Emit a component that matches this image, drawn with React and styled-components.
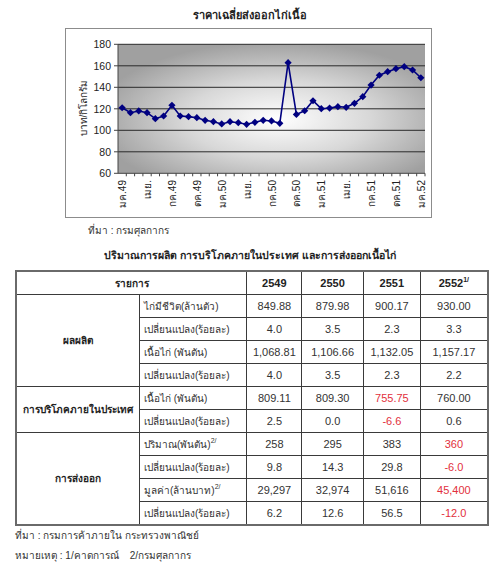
import React from "react";
import styled, { createGlobalStyle } from "styled-components";

const GlobalStyle = createGlobalStyle`
  html, body {
    margin: 0;
    padding: 0;
    background: #fff;
  }
  body {
    font-family: Tahoma, "Liberation Sans", "DejaVu Sans", sans-serif;
    color: #222;
  }
`;

const Page = styled.div`
  width: 500px;
  height: 578px;
  padding-top: 8px;
  box-sizing: border-box;
`;

const Title = styled.div`
  text-align: center;
  font-weight: bold;
  font-size: ${(p) => p.$size || 11}px;
  line-height: 14px;
  margin-top: ${(p) => p.$gap || 0}px;
`;

const ChartFrame = styled.div`
  margin: 6px 0 0 65px;
  width: 367px;
  height: 190px;
  border: 1px solid #8c8c8c;
  box-sizing: border-box;

  svg {
    display: block;
  }
`;

const Note = styled.div`
  font-size: 10px;
  line-height: 14px;
  color: #333;
  margin-top: ${(p) => p.$gap}px;
  padding-left: ${(p) => p.$indent}px;
  white-space: pre;
`;

const TableWrap = styled.div`
  margin: 8px 0 0 15px;
  width: 474px;
`;

const Table = styled.table`
  width: 100%;
  table-layout: fixed;
  border-collapse: collapse;
  border: 2px solid #6a6a6a;
  font-size: 11px;
  font-family: "Liberation Sans", Arial, sans-serif;
`;

const Col = styled.col`
  width: ${(p) => p.$pct}%;
`;

const Head = styled.th`
  border: 1px solid #3a3a3a;
  height: 22px;
  padding: 0;
  font-weight: bold;
  font-size: ${(p) => (p.$thai ? 10 : 11)}px;
  font-family: ${(p) => (p.$thai ? "Tahoma, sans-serif" : "inherit")};
  color: #222;
  text-align: center;
  overflow: hidden;
`;

const Cell = styled.td`
  border: 1px solid #3a3a3a;
  height: 22px;
  padding: ${(p) => (p.$left ? "0 0 0 4px" : "0")};
  text-align: ${(p) => (p.$left ? "left" : "center")};
  font-weight: ${(p) => (p.$bold ? "bold" : "normal")};
  font-size: ${(p) => (p.$thai ? 10 : 11)}px;
  font-family: ${(p) => (p.$thai ? "Tahoma, sans-serif" : "inherit")};
  color: ${(p) => (p.$red ? "#e2303c" : p.$bold ? "#222" : "#333")};
  white-space: nowrap;
  overflow: hidden;
`;

const Sup = styled.sup`
  font-size: 7px;
  line-height: 0;
  vertical-align: 5px;
  font-family: "Liberation Sans", Arial, sans-serif;
`;

const prices = [
  121.0, 116.4, 118, 116.4, 110.8, 113.3, 123.3, 113.3, 112.7, 111.7, 109.3,
  108, 105.9, 108, 107.1, 105.6, 107.4, 109.3, 108.7, 106.5, 162.9, 114.8,
  118.2, 127.5, 120.1, 120.7, 122, 121.4, 125.1, 131.3, 142.1, 151.2, 154.5,
  157.3, 159.2, 156.1, 148.9,
];

const monthLabels = [
  "มค.49", "เมย.", "กค.49", "ตค.49", "มค.50", "เมย.", "กค.50",
  "ตค.50", "มค.51", "เมย.", "กค.51", "ตค.51", "มค.52",
];

const X0 = 52;
const X1 = 359;
const Y0 = 15.3;
const Y1 = 144.3;
const cw = (X1 - X0) / prices.length;
const xOf = (i) => X0 + cw * (i + 0.5);
const yOf = (v) => Y1 - ((v - 60) * (Y1 - Y0)) / 120;

const PriceChart = () => {
  const grid = [60, 80, 100, 120, 140, 160, 180];
  const pts = prices.map((v, i) => [xOf(i), yOf(v)]);
  return (
    <svg width="365" height="188" viewBox="0 0 365 188">
      <defs>
        <radialGradient id="plotBg" cx="0.52" cy="0.58" r="0.6">
          <stop offset="0" stopColor="#ffffff" />
          <stop offset="0.5" stopColor="#d8d8d8" />
          <stop offset="1" stopColor="#a0a0a0" />
        </radialGradient>
      </defs>
      <rect x={X0} y={Y0} width={X1 - X0} height={Y1 - Y0} fill="url(#plotBg)" />
      {grid.map((g) => (
        <g key={g}>
          {g > 60 && (
            <line x1={X0} x2={X1} y1={yOf(g)} y2={yOf(g)} stroke="#2a2a2a" strokeWidth="1" />
          )}
          <line x1={X0 - 4} x2={X0} y1={yOf(g)} y2={yOf(g)} stroke="#444" />
          <text
            x="45"
            y={yOf(g) + 4}
            textAnchor="end"
            fontSize="10.5"
            fontFamily="'Liberation Sans', Arial, sans-serif"
            fill="#222"
          >
            {g}
          </text>
        </g>
      ))}
      <line x1={X0} x2={X0} y1={Y0} y2={Y1} stroke="#444" />
      <line x1={X0} x2={X1} y1={Y1} y2={Y1} stroke="#444" />
      {prices.map((_, i) => (
        <line
          key={i}
          x1={X0 + cw * (i + 1)}
          x2={X0 + cw * (i + 1)}
          y1={Y1}
          y2={Y1 + 3}
          stroke="#444"
        />
      ))}
      <text
        transform="translate(21 79) rotate(-90)"
        textAnchor="middle"
        fontSize="10"
        fill="#222"
        fontFamily="Tahoma, sans-serif"
      >
        บาท/กิโลกรัม
      </text>
      {monthLabels.map((m, k) => {
        const x = xOf(k * 3) + 4;
        return (
          <text
            key={k}
            x={x}
            y="151"
            transform={`rotate(-90 ${x} 151)`}
            textAnchor="end"
            fontSize="10"
            fill="#222"
            fontFamily="Tahoma, sans-serif"
          >
            {m}
          </text>
        );
      })}
      <polyline
        points={pts.map((p) => p.join(",")).join(" ")}
        fill="none"
        stroke="#000080"
        strokeWidth="1.6"
      />
      {pts.map(([x, y], i) => (
        <polygon
          key={i}
          points={`${x},${y - 3.6} ${x + 3.6},${y} ${x},${y + 3.6} ${x - 3.6},${y}`}
          fill="#000080"
        />
      ))}
    </svg>
  );
};

const groups = [
  {
    name: "ผลผลิต",
    items: [
      { label: "ไก่มีชีวิต(ล้านตัว)", values: ["849.88", "879.98", "900.17", "930.00"] },
      { label: "เปลี่ยนแปลง(ร้อยละ)", values: ["4.0", "3.5", "2.3", "3.3"] },
      { label: "เนื้อไก่ (พันตัน)", values: ["1,068.81", "1,106.66", "1,132.05", "1,157.17"] },
      { label: "เปลี่ยนแปลง(ร้อยละ)", values: ["4.0", "3.5", "2.3", "2.2"] },
    ],
  },
  {
    name: "การบริโภคภายในประเทศ",
    items: [
      { label: "เนื้อไก่ (พันตัน)", values: ["809.11", "809.30", "755.75", "760.00"], red: [2] },
      { label: "เปลี่ยนแปลง(ร้อยละ)", values: ["2.5", "0.0", "-6.6", "0.6"], red: [2] },
    ],
  },
  {
    name: "การส่งออก",
    items: [
      { label: "ปริมาณ(พันตัน)", sup: "2/", values: ["258", "295", "383", "360"], red: [3] },
      { label: "เปลี่ยนแปลง(ร้อยละ)", values: ["9.8", "14.3", "29.8", "-6.0"], red: [3] },
      { label: "มูลค่า(ล้านบาท)", sup: "2/", values: ["29,297", "32,974", "51,616", "45,400"], red: [3] },
      { label: "เปลี่ยนแปลง(ร้อยละ)", values: ["6.2", "12.6", "56.5", "-12.0"], red: [3] },
    ],
  },
];

// column widths as share of the 474px table: 124, 108, 55, 62, 57, 68
const colPcts = [26.16, 22.78, 11.6, 13.08, 12.03, 14.35];

const App = () => (
  <Page>
    <GlobalStyle />
    <Title>ราคาเฉลี่ยส่งออกไก่เนื้อ</Title>
    <ChartFrame>
      <PriceChart />
    </ChartFrame>
    <Note $gap={6} $indent={88}>ที่มา : กรมศุลกากร</Note>
    <Title $gap={10} $size={10.5}>
      ปริมาณการผลิต การบริโภคภายในประเทศ และการส่งออกเนื้อไก่
    </Title>
    <TableWrap>
      <Table>
        <colgroup>
          {colPcts.map((w, i) => (
            <Col key={i} $pct={w} />
          ))}
        </colgroup>
        <thead>
          <tr>
            <Head colSpan={2} $thai>
              รายการ
            </Head>
            <Head>2549</Head>
            <Head>2550</Head>
            <Head>2551</Head>
            <Head>
              2552<Sup>1/</Sup>
            </Head>
          </tr>
        </thead>
        <tbody>
          {groups.map((g) =>
            g.items.map((it, i) => (
              <tr key={g.name + i}>
                {i === 0 && (
                  <Cell rowSpan={g.items.length} $bold $thai>
                    {g.name}
                  </Cell>
                )}
                <Cell $left $thai>
                  {it.label}
                  {it.sup && <Sup>{it.sup}</Sup>}
                </Cell>
                {it.values.map((v, j) => (
                  <Cell key={j} $red={it.red && it.red.includes(j)}>
                    {v}
                  </Cell>
                ))}
              </tr>
            ))
          )}
        </tbody>
      </Table>
    </TableWrap>
    <Note $gap={3} $indent={15}>ที่มา : กรมการค้าภายใน กระทรวงพาณิชย์</Note>
    <Note $gap={6} $indent={15}>หมายเหตุ : 1/คาดการณ์    2/กรมศุลกากร</Note>
  </Page>
);

export default App;
